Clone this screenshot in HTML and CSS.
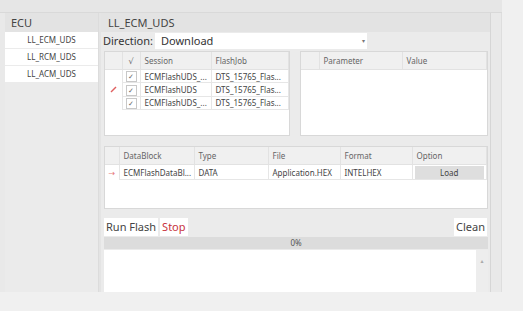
FILE: index.html
```html
<!DOCTYPE html>
<html lang="en">
<head>
  <meta charset="UTF-8">
  <title>Flash Tool</title>
  <link rel="stylesheet" href="styles.css">
</head>
<body>
  <div class="window">
    <div class="topbar"></div>
    <div class="main">
      <!-- ECU list -->
      <div class="ecu-panel">
        <div class="panel-title">ECU</div>
        <div class="ecu-item">LL_ECM_UDS</div>
        <div class="ecu-item">LL_RCM_UDS</div>
        <div class="ecu-item">LL_ACM_UDS</div>
      </div>
      <div class="splitter"></div>

      <!-- Selected ECU -->
      <div class="content">
        <div class="content-title">LL_ECM_UDS</div>
        <div class="content-body">
          <div class="direction-row">
            <span class="direction-label">Direction:</span>
            <div class="select">Download<span class="caret">&#9662;</span></div>
          </div>

          <div class="grids">
            <div class="grid session-grid">
              <table>
                <colgroup><col style="width:17px"><col style="width:18px"><col style="width:71px"><col></colgroup>
                <thead>
                  <tr><th></th><th class="center">&#8730;</th><th>Session</th><th>FlashJob</th></tr>
                </thead>
                <tbody>
                  <tr><td class="rowhead"></td><td class="center"><span class="check">&#10003;</span></td><td>ECMFlashUDS_...</td><td>DTS_15765_Flas...</td></tr>
                  <tr><td class="rowhead"><svg class="pencil" width="7" height="7" viewBox="0 0 7 7"><path d="M1 6 L6 1" stroke="#e06060" stroke-width="1.4"/></svg></td><td class="center"><span class="check">&#10003;</span></td><td>ECMFlashUDS</td><td>DTS_15765_Flas...</td></tr>
                  <tr><td class="rowhead"></td><td class="center"><span class="check">&#10003;</span></td><td>ECMFlashUDS_...</td><td>DTS_15765_Flas...</td></tr>
                </tbody>
              </table>
            </div>
            <div class="grid param-grid">
              <table>
                <colgroup><col style="width:18px"><col style="width:83px"><col></colgroup>
                <thead>
                  <tr><th></th><th>Parameter</th><th>Value</th></tr>
                </thead>
              </table>
            </div>
          </div>

          <div class="grid block-grid">
            <table>
              <colgroup><col style="width:14px"><col style="width:75px"><col style="width:74px"><col style="width:72px"><col style="width:72px"><col></colgroup>
              <thead>
                <tr><th></th><th>DataBlock</th><th>Type</th><th>File</th><th>Format</th><th>Option</th></tr>
              </thead>
              <tbody>
                <tr>
                  <td class="rowhead arrow">&#8594;</td>
                  <td>ECMFlashDataBl...</td>
                  <td>DATA</td>
                  <td>Application.HEX</td>
                  <td>INTELHEX</td>
                  <td class="btn-cell"><span class="load-btn">Load</span></td>
                </tr>
              </tbody>
            </table>
          </div>

          <div class="actions">
            <span class="btn">Run Flash</span>
            <span class="btn stop">Stop</span>
            <span class="btn clean">Clean</span>
          </div>
          <div class="progress">0%</div>
          <div class="log">
            <div class="log-text"></div>
            <div class="scrollbar"><span class="scroll-up">&#9652;</span></div>
          </div>
        </div>
      </div>
      <div class="side-strip"></div>
    </div>
  </div>
</body>
</html>
```

FILE: styles.css
```css
/* Global */
body {
  margin: 0;
  background-color: #f0f0f0;
  font-family: 'Noto Sans', 'DejaVu Sans', sans-serif;
  color: #333;
}
.window {
  width: 502px;
  height: 292px;
  background-color: #e9e9e9;
  display: flex;
  flex-direction: column;
}
.topbar {
  height: 12px;
  background-color: #e6e6e6;
  border-bottom: 1px solid #d9d9d9;
}
.main {
  flex: 1;
  display: flex;
  min-height: 0;
}

/* ECU list */
.ecu-panel {
  width: 93px;
  margin-left: 5px;
  background-color: #ebebeb;
}
.panel-title {
  height: 19px;
  line-height: 19px;
  padding-left: 6px;
  font-size: 11px;
  background-color: #e3e3e3;
  color: #444;
}
.ecu-item {
  height: 16px;
  line-height: 16px;
  margin-bottom: 1px;
  background-color: #fff;
  text-align: center;
  font-size: 8px;
  color: #444;
}
.splitter {
  width: 3px;
  background-color: #e4e4e4;
  border-left: 1px solid #dcdcdc;
  box-sizing: border-box;
}

/* Content */
.content {
  width: 389px;
  display: flex;
  flex-direction: column;
  background-color: #ebebeb;
}
.content-title {
  height: 19px;
  line-height: 19px;
  padding-left: 7px;
  font-size: 11px;
  background-color: #e3e3e3;
  color: #444;
}
.content-body {
  flex: 1;
  padding: 0 2px 0 3px;
  display: flex;
  flex-direction: column;
}
.direction-row {
  display: flex;
  align-items: center;
  height: 17px;
}
.direction-label {
  font-size: 11px;
  width: 52px;
  flex-shrink: 0;
  white-space: nowrap;
  margin-left: -1px;
  color: #333;
}
.select {
  width: 204px;
  height: 16px;
  line-height: 16px;
  padding-left: 6px;
  padding-right: 2px;
  background-color: #fff;
  font-size: 11px;
  color: #333;
  display: flex;
  justify-content: space-between;
}
.caret {
  font-size: 6px;
  color: #777;
}

/* Grids */
.grids {
  display: flex;
  gap: 10px;
  margin-top: 2px;
}
.grid {
  background-color: #fff;
  border: 1px solid #d8d8d8;
  box-sizing: border-box;
}
.session-grid {
  width: 186px;
  height: 85px;
}
.param-grid {
  width: 188px;
  height: 85px;
}
.block-grid {
  width: 384px;
  height: 63px;
  margin-top: 10px;
}
table {
  width: 100%;
  border-collapse: collapse;
  table-layout: fixed;
  font-size: 8px;
  color: #444;
}
th {
  height: 17px;
  background-color: #f0f0f0;
  font-weight: normal;
  text-align: left;
  padding: 0 0 0 4px;
  border-right: 1px solid #e2e2e2;
  border-bottom: 1px solid #e2e2e2;
  color: #666;
  white-space: nowrap;
  overflow: hidden;
}
td {
  height: 12px;
  padding: 0 0 0 4px;
  border-right: 1px solid #e6e6e6;
  border-bottom: 1px solid #e6e6e6;
  white-space: nowrap;
  overflow: hidden;
}
th.center, td.center {
  text-align: center;
  padding: 0;
}
td.rowhead {
  padding: 0;
  text-align: center;
  border-bottom: none;
}
.check {
  display: inline-block;
  width: 9px;
  height: 9px;
  line-height: 9px;
  border: 1px solid #c8c8c8;
  font-size: 7px;
  color: #666;
  text-align: center;
  vertical-align: middle;
}
.pencil {
  display: block;
  margin: 0 auto;
}
.block-grid td {
  height: 14px;
}
.arrow {
  color: #e67b7b;
  font-size: 8px;
}
.btn-cell {
  padding: 0 2px;
}
.load-btn {
  display: block;
  background-color: #dedede;
  text-align: center;
  height: 13px;
  line-height: 13px;
}

/* Actions */
.actions {
  display: flex;
  gap: 2px;
  margin-top: 9px;
  height: 18px;
  align-items: stretch;
}
.btn {
  background-color: #fff;
  font-size: 11px;
  line-height: 18px;
  padding: 0 2px;
  color: #444;
}
.btn.stop {
  color: #c8323c;
}
.btn.clean {
  margin-left: auto;
  margin-right: 1px;
}
.progress {
  height: 12px;
  line-height: 12px;
  margin-top: 1px;
  background-color: #dcdcdc;
  text-align: center;
  font-size: 8px;
  color: #555;
}
.log {
  flex: 1;
  display: flex;
  margin-top: 1px;
}
.log-text {
  flex: 1;
  background-color: #fff;
}
.scrollbar {
  width: 12px;
  background-color: #ededed;
  text-align: center;
  line-height: 10px;
  padding-top: 2px;
}
.scroll-up {
  font-size: 6px;
  color: #aaa;
}
.side-strip {
  width: 12px;
  border-left: 1px solid #d6d6d6;
  border-right: 1px solid #dedede;
  background-color: #e9e9e9;
  box-sizing: border-box;
}
```
